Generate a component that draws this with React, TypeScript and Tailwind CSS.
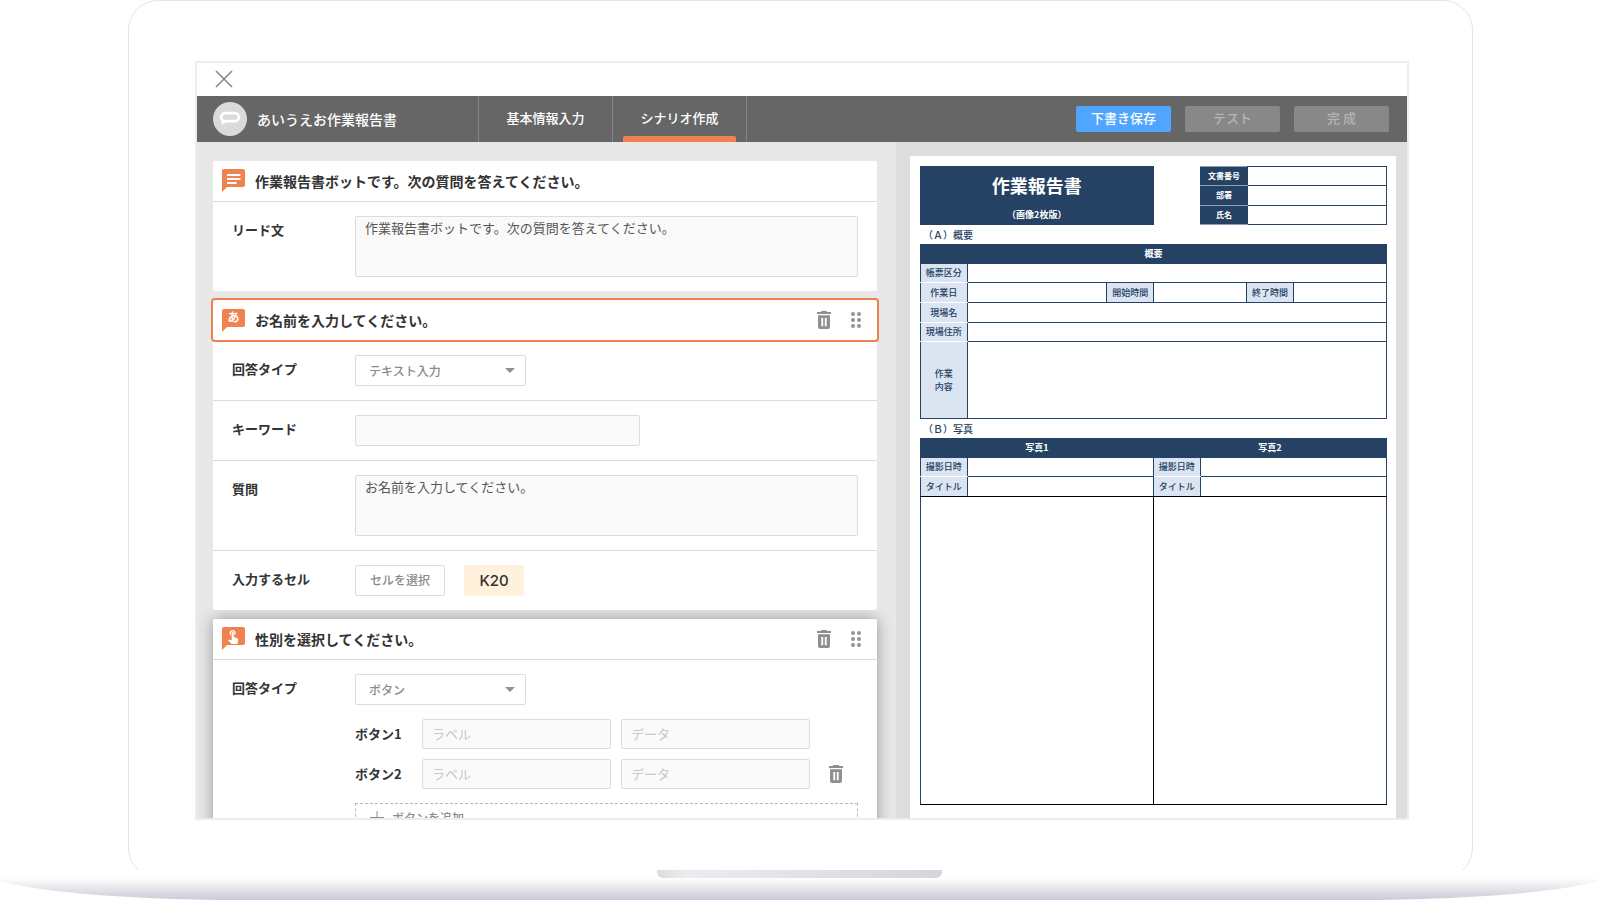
import { useState, type ReactNode } from "react";
import { MdTouchApp } from "react-icons/md";

type IconType = "message" | "text" | "button";

const INPUT =
  "rounded-xs border border-[#dcdcdc] bg-[#fafafa] text-[#555] outline-none";

/* Icons */
function QuestionIcon({ type }: { type: IconType }) {
  return (
    <span className="relative block h-[23px] w-[23px] shrink-0">
      <svg viewBox="0 0 23 23" className="h-[23px] w-[23px]" aria-hidden="true">
        <path
          d="M2 0H21a2 2 0 0 1 2 2V16a2 2 0 0 1-2 2H5L0 23V2a2 2 0 0 1 2-2z"
          fill="#f0824f"
        />
        {type === "message" && (
          <path d="M5 6H18.500M5 10H18.500M5 14H14.500" stroke="#fff" strokeWidth="2" />
        )}
      </svg>
      {type === "text" && (
        <span className="absolute inset-x-0 top-0 text-center text-xs leading-4 font-bold text-white">
          あ
        </span>
      )}
      {type === "button" && (
        <MdTouchApp className="absolute top-px left-[3px] h-4 w-4 text-white" />
      )}
    </span>
  );
}

function TrashIcon() {
  return (
    <svg viewBox="0 0 14 18" className="h-[18px] w-[14px]" aria-hidden="true">
      <path d="M4.500 0h5l.8 1H14v2H0V1h3.700z" fill="#8f8f8f" />
      <path
        fillRule="evenodd"
        d="M1 4.200h12V16a2 2 0 0 1-2 2H3a2 2 0 0 1-2-2zM4.300 7v8.200h1.900V7zM7.800 7v8.200h1.900V7z"
        fill="#8f8f8f"
      />
    </svg>
  );
}

function DragIcon() {
  return (
    <svg viewBox="0 0 10 16" className="h-4 w-[10px]" fill="#949494" aria-hidden="true">
      {[2, 8, 14].map((y) => (
        <g key={y}>
          <circle cx="2" cy={y} r="2" />
          <circle cx="8" cy={y} r="2" />
        </g>
      ))}
    </svg>
  );
}

function CardHeader({
  type,
  title,
  active,
  editable,
}: {
  type: IconType;
  title: string;
  active?: boolean;
  editable?: boolean;
}) {
  return (
    <div
      className={
        active
          ? "relative mb-px flex h-10 items-center rounded-xs bg-white pr-4 pl-[9px] ring-2 ring-[#ee8150]"
          : "flex h-[41px] items-center border-b border-[#dcdcdc] pr-4 pb-px pl-[9px]"
      }
    >
      <QuestionIcon type={type} />
      <h2 className="ml-[10px] flex-1 text-sm font-bold text-[#333]">{title}</h2>
      {editable && (
        <div className="flex items-center gap-5">
          <button type="button" aria-label="削除">
            <TrashIcon />
          </button>
          <button type="button" aria-label="並べ替え">
            <DragIcon />
          </button>
        </div>
      )}
    </div>
  );
}

function Row({ id, label, children }: { id: string; label: string; children: ReactNode }) {
  return (
    <div className="flex items-start border-b border-[#dcdcdc] px-[19px] py-[14px] last:border-b-0">
      <label
        htmlFor={id}
        className="w-[123px] shrink-0 text-[13px] leading-7 font-bold text-[#333]"
      >
        {label}
      </label>
      {children}
    </div>
  );
}

function TypeSelect({ id, value }: { id: string; value: string }) {
  return (
    <div className="relative w-[171px]">
      <select
        id={id}
        defaultValue={value}
        className="h-[31px] w-full appearance-none rounded-xs border border-[#dcdcdc] bg-white pl-[13px] text-xs font-medium text-[#8a8a8a]"
      >
        <option>テキスト入力</option>
        <option>ボタン</option>
      </select>
      <svg
        viewBox="0 0 10 5"
        className="pointer-events-none absolute top-[13px] right-[11px] h-[5px] w-[10px]"
        aria-hidden="true"
      >
        <path d="M0 0H10L5 5z" fill="#909090" />
      </svg>
    </div>
  );
}

function OptionRow({ index, removable }: { index: number; removable?: boolean }) {
  return (
    <div className="flex items-center">
      <span className="w-[67px] shrink-0 text-[13px] font-bold text-[#333]">ボタン{index}</span>
      <div className="flex flex-1 gap-[10px]">
        <input
          aria-label={`ボタン${index} ラベル`}
          placeholder="ラベル"
          className={`${INPUT} h-[30px] w-0 flex-1 px-[9px] pb-[2px] text-[13px] placeholder:text-[#c8c8c8]`}
        />
        <input
          aria-label={`ボタン${index} データ`}
          placeholder="データ"
          className={`${INPUT} h-[30px] w-0 flex-1 px-[9px] pb-[2px] text-[13px] placeholder:text-[#c8c8c8]`}
        />
      </div>
      <div className="flex w-12 pl-[19px]">
        {removable && (
          <button type="button" aria-label="削除">
            <TrashIcon />
          </button>
        )}
      </div>
    </div>
  );
}

/* Left pane */
function ScenarioEditor() {
  return (
    <div className="flex min-h-0 flex-col gap-[9px] overflow-hidden bg-[#e8e8e8] pt-[19px] pr-[19px] pl-4">
      <section className="shrink-0 rounded-xs bg-white">
        <CardHeader type="message" title="作業報告書ボットです。次の質問を答えてください。" />
        <Row id="lead" label="リード文">
          <textarea
            id="lead"
            defaultValue="作業報告書ボットです。次の質問を答えてください。"
            className={`${INPUT} h-[61px] flex-1 resize-none px-[9px] py-px text-[13px] leading-5`}
          />
        </Row>
      </section>

      <section className="relative z-10 shrink-0 rounded-xs bg-white">
        <CardHeader type="text" title="お名前を入力してください。" active editable />
        <Row id="type1" label="回答タイプ">
          <TypeSelect id="type1" value="テキスト入力" />
        </Row>
        <Row id="keyword" label="キーワード">
          <input id="keyword" className={`${INPUT} h-[31px] w-[285px] px-[9px] text-[13px]`} />
        </Row>
        <Row id="question" label="質問">
          <textarea
            id="question"
            defaultValue="お名前を入力してください。"
            className={`${INPUT} h-[61px] flex-1 resize-none px-[9px] py-px text-[13px] leading-5`}
          />
        </Row>
        <Row id="cell" label="入力するセル">
          <button
            id="cell"
            type="button"
            className="h-[31px] w-[90px] rounded-xs border border-[#dcdcdc] pb-px text-xs font-medium text-[#8a8a8a]"
          >
            セルを選択
          </button>
          <span className="ml-[19px] w-[60px] rounded-xs bg-[#fff1dc] text-center font-['Inter',sans-serif] text-[15px] leading-[31px] font-medium text-[#333]">
            K20
          </span>
        </Row>
      </section>

      <section className="shrink-0 rounded-xs bg-white shadow-[0_0_16px_rgba(0,0,0,0.35)]">
        <CardHeader type="button" title="性別を選択してください。" editable />
        <Row id="type2" label="回答タイプ">
          <div className="flex-1">
            <TypeSelect id="type2" value="ボタン" />
            <div className="mt-[14px] flex flex-col gap-[10px]">
              <OptionRow index={1} />
              <OptionRow index={2} removable />
            </div>
            <button
              type="button"
              className="mt-[14px] flex h-[30px] w-full items-center gap-2 border border-dashed border-[#b8b8b8] pl-[14px] text-xs font-medium text-[#8a8a8a]"
            >
              <svg viewBox="0 0 14 14" className="h-[14px] w-[14px]" aria-hidden="true">
                <path d="M7 0V14M0 6.500H14" stroke="#8a8a8a" />
              </svg>
              ボタンを追加
            </button>
          </div>
        </Row>
      </section>
    </div>
  );
}

/* Right pane */
const LIGHT = "border border-[#254163] border-y-white bg-[#dbe5f1] p-0 font-medium";
const CELL = "border border-[#254163] p-0";

function ReportSheet() {
  return (
    <div className="flex min-h-0 overflow-hidden bg-[#ddd] pt-[14px] pr-[11px] pl-[14px]">
      <div className="flex-1 bg-white pt-[10px] pr-[9px] pl-[10px] text-[9px] leading-3 text-[#254163]">
        <div className="flex justify-between">
          <div className="flex h-[59px] w-1/2 flex-col items-center bg-[#254163] text-white">
            <h1 className="pt-[7px] text-lg leading-6 font-bold">作業報告書</h1>
            <p className="pt-3 font-bold">（画像2枚版）</p>
          </div>
          <table className="h-[59px] w-2/5 table-fixed border-collapse">
            <tbody>
              {["文書番号", "部署", "氏名"].map((name) => (
                <tr key={name}>
                  <th
                    scope="row"
                    className="w-1/4 border border-[#254163] border-y-[#8f9db2] bg-[#254163] p-0 text-[8px] font-bold text-white first:border-l-[#254163]"
                  >
                    {name}
                  </th>
                  <td className="border border-[#254163] p-0" />
                </tr>
              ))}
            </tbody>
          </table>
        </div>

        <p className="pl-[3px] text-[10px] leading-[19px] font-medium">（Ａ）概要</p>
        <table className="w-full table-fixed border-collapse">
          <colgroup>
            <col className="w-[10%]" />
            <col className="w-[30%]" />
            <col className="w-[10%]" />
            <col className="w-[20%]" />
            <col className="w-[10%]" />
            <col className="w-[20%]" />
          </colgroup>
          <thead>
            <tr className="h-[19px] bg-[#254163] text-white">
              <th colSpan={6} className="border border-[#254163] p-0 font-bold">
                概要
              </th>
            </tr>
          </thead>
          <tbody>
            <tr className="h-[19px]">
              <th scope="row" className={LIGHT}>帳票区分</th>
              <td colSpan={5} className={CELL} />
            </tr>
            <tr className="h-5">
              <th scope="row" className={LIGHT}>作業日</th>
              <td className={CELL} />
              <th className={`${CELL} bg-[#dbe5f1] font-medium`}>開始時間</th>
              <td className={CELL} />
              <th className={`${CELL} bg-[#dbe5f1] font-medium`}>終了時間</th>
              <td className={CELL} />
            </tr>
            <tr className="h-5">
              <th scope="row" className={LIGHT}>現場名</th>
              <td colSpan={5} className={CELL} />
            </tr>
            <tr className="h-[19px]">
              <th scope="row" className={LIGHT}>現場住所</th>
              <td colSpan={5} className={CELL} />
            </tr>
            <tr className="h-[77px]">
              <th
                scope="row"
                className="border border-[#254163] border-t-white bg-[#dbe5f1] p-0 leading-[13px] font-medium"
              >
                作業
                <br />
                内容
              </th>
              <td colSpan={5} className={CELL} />
            </tr>
          </tbody>
        </table>

        <p className="pl-[3px] text-[10px] leading-[19px] font-medium">（Ｂ）写真</p>
        <table className="w-full table-fixed border-collapse">
          <colgroup>
            <col className="w-[10%]" />
            <col className="w-[40%]" />
            <col className="w-[10%]" />
            <col className="w-[40%]" />
          </colgroup>
          <thead>
            <tr className="h-[19px] bg-[#254163] text-white">
              <th colSpan={2} className="border border-[#254163] p-0 font-bold">写真1</th>
              <th colSpan={2} className="border border-[#254163] p-0 font-bold">写真2</th>
            </tr>
          </thead>
          <tbody>
            <tr className="h-[19px]">
              <th scope="row" className={LIGHT}>撮影日時</th>
              <td className={CELL} />
              <th scope="row" className={LIGHT}>撮影日時</th>
              <td className={CELL} />
            </tr>
            <tr className="h-5">
              <th scope="row" className="border border-[#254163] border-t-white border-b-black bg-[#dbe5f1] p-0 font-medium">
                タイトル
              </th>
              <td className="border border-[#254163] border-b-black p-0" />
              <th scope="row" className="border border-[#254163] border-t-white border-b-black bg-[#dbe5f1] p-0 font-medium">
                タイトル
              </th>
              <td className="border border-[#254163] border-b-black p-0" />
            </tr>
            <tr className="h-[308px]">
              <td colSpan={2} className="border border-black border-l-[#254163] p-0" />
              <td colSpan={2} className="border border-black border-r-[#254163] p-0" />
            </tr>
          </tbody>
        </table>
      </div>
    </div>
  );
}

const TABS = ["基本情報入力", "シナリオ作成"];

export default function App() {
  const [tab, setTab] = useState("シナリオ作成");

  return (
    <div
      lang="ja"
      className="flex h-screen flex-col overflow-hidden bg-white font-['Noto_Sans_CJK_JP',sans-serif]"
    >
      {/* Laptop body */}
      <div className="flex min-h-0 flex-1 overflow-hidden pr-[125px] pl-32">
        <div className="-mb-2 flex min-w-0 flex-1 rounded-[30px] border border-[#e4e4e4] pt-[60px] pr-[63px] pb-[57px] pl-[66px]">
          <div className="flex min-w-0 flex-1 flex-col overflow-hidden border-2 border-[#e9eef0]">
            <div className="flex h-[33px] shrink-0 items-center pb-[2px] pl-[18px]">
              <button type="button" aria-label="閉じる">
                <svg viewBox="0 0 18 18" className="h-[18px] w-[18px]" aria-hidden="true">
                  <path d="M1 1L17 17M17 1L1 17" stroke="#888" strokeWidth="1.600" />
                </svg>
              </button>
            </div>

            <header className="flex h-[46px] shrink-0 items-center bg-[#666] pr-[18px] text-white">
              <div className="flex w-[281px] items-center pl-4">
                <svg viewBox="0 0 34 34" className="h-[34px] w-[34px]" aria-hidden="true">
                  <circle cx="17" cy="17" r="17" fill="#dadada" />
                  <path d="M8.500 16L8.800 23.300L14 19.500z" fill="#fff" />
                  <rect
                    x="8.200"
                    y="11.200"
                    width="17.600"
                    height="8"
                    rx="4"
                    fill="#dadada"
                    stroke="#fff"
                    strokeWidth="2.800"
                  />
                </svg>
                <span className="ml-[10px] pb-px text-sm font-medium">あいうえお作業報告書</span>
              </div>
              <nav className="flex h-full border-l border-[#858585]">
                {TABS.map((name) => (
                  <button
                    key={name}
                    type="button"
                    onClick={() => setTab(name)}
                    className="relative w-[134px] border-r border-[#858585] pb-[2px] text-[13px] font-medium"
                  >
                    {name}
                    {tab === name && (
                      <span className="absolute inset-x-[10px] bottom-0 h-[6px] rounded-t-xs bg-[#f0824f]" />
                    )}
                  </button>
                ))}
              </nav>
              <div className="ml-auto flex gap-[14px] text-[13px] font-medium">
                <button type="button" className="h-[26px] w-[95px] rounded-xs bg-[#50a6ff] pb-[2px]">
                  下書き保存
                </button>
                <button
                  type="button"
                  disabled
                  className="h-[26px] w-[95px] rounded-xs bg-[#888] pb-[2px] text-[#b4b4b4]"
                >
                  テスト
                </button>
                <button
                  type="button"
                  disabled
                  className="h-[26px] w-[95px] rounded-xs bg-[#888] pb-[2px] text-[#b4b4b4]"
                >
                  完 成
                </button>
              </div>
            </header>

            <main className="grid min-h-0 flex-1 grid-cols-[699fr_511fr] grid-rows-1">
              <ScenarioEditor />
              <ReportSheet />
            </main>
          </div>
        </div>
      </div>

      {/* Laptop base */}
      <div className="mx-auto h-2 w-[285px] rounded-b-md bg-linear-to-r from-[#dcdcdc] via-[#ececf0] via-10% to-[#d6d5dd]" />
      <svg
        viewBox="0 0 1598 22"
        preserveAspectRatio="none"
        className="h-[22px] w-full shrink-0"
        aria-hidden="true"
      >
        <defs>
          <linearGradient id="base" x1="0" y1="0" x2="0" y2="1">
            <stop offset="0" stopColor="#fff" />
            <stop offset="1" stopColor="#cccad6" />
          </linearGradient>
        </defs>
        <path
          d="M0 0V3C30 11 90 20 220 22H1378C1508 20 1568 11 1598 3V0z"
          fill="url(#base)"
        />
      </svg>
    </div>
  );
}
